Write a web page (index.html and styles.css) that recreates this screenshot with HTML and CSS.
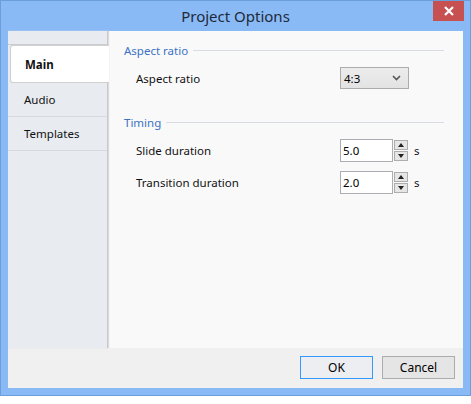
FILE: index.html
```html
<!DOCTYPE html>
<html lang="en">
<head>
  <meta charset="UTF-8">
  <title>Project Options</title>
  <link rel="stylesheet" href="styles.css">
</head>
<body>
  <div class="window">
    <div class="titlebar">
      <span class="title">Project Options</span>
      <div class="close">
        <svg width="12" height="10" viewBox="0 0 12 10">
          <path d="M2 1 L10 9 M10 1 L2 9" stroke="#fff" stroke-width="2.2"/>
        </svg>
      </div>
    </div>
    <div class="client">
      <div class="main">
        <div class="sidebar">
          <div class="tab-spacer"></div>
          <div class="tab active">Main</div>
          <div class="tab">Audio</div>
          <div class="tab">Templates</div>
        </div>
        <div class="content">
          <div class="group-head"><span>Aspect ratio</span><i></i></div>
          <div class="row first">
            <span class="label">Aspect ratio</span>
            <div class="select">
              <span>4:3</span>
              <svg width="9" height="6" viewBox="0 0 9 6">
                <path d="M1 1 L4.5 4.5 L8 1" fill="none" stroke="#555" stroke-width="1.6"/>
              </svg>
            </div>
          </div>
          <div class="group-head timing"><span>Timing</span><i></i></div>
          <div class="row first">
            <span class="label">Slide duration</span>
            <div class="spin-box">
              <div class="input">5.0</div>
              <div class="spin">
                <div class="spin-btn"><b class="up"></b></div>
                <div class="spin-btn"><b class="down"></b></div>
              </div>
              <span class="unit">s</span>
            </div>
          </div>
          <div class="row">
            <span class="label">Transition duration</span>
            <div class="spin-box">
              <div class="input">2.0</div>
              <div class="spin">
                <div class="spin-btn"><b class="up"></b></div>
                <div class="spin-btn"><b class="down"></b></div>
              </div>
              <span class="unit">s</span>
            </div>
          </div>
        </div>
      </div>
      <div class="footer">
        <button class="btn default">OK</button>
        <button class="btn">Cancel</button>
      </div>
    </div>
  </div>
</body>
</html>
```

FILE: styles.css
```css
body {
  margin: 0;
  background: #ffffff;
  font-family: 'Noto Sans', 'Open Sans', sans-serif;
  font-size: 11.5px;
  color: #000;
}

.window {
  width: 471px;
  height: 396px;
  box-sizing: border-box;
  background: #8abaf5;
  border: 1px solid #6a9fdc;
  display: flex;
  flex-direction: column;
}

.titlebar {
  height: 30px;
  position: relative;
  display: flex;
  justify-content: center;
  align-items: center;
}

.title {
  font-size: 15px;
  color: #1e2a3a;
  margin-top: -1px;
}

.close {
  position: absolute;
  right: 6px;
  top: 0;
  width: 31px;
  height: 20px;
  background: #c75050;
  display: flex;
  justify-content: center;
  align-items: center;
}

.client {
  margin: 0 7px 7px;
  flex: 1;
  display: flex;
  flex-direction: column;
  background: #f0f0f0;
}

.main {
  height: 317px;
  display: flex;
  background: #f9f9f9;
}

.sidebar {
  width: 99px;
  background: #e8ebf0;
  border-right: 1px solid #c6c8cc;
  box-shadow: 1px 0 1px #dcdcdc;
  display: flex;
  flex-direction: column;
}

.tab-spacer {
  height: 13px;
  border-bottom: 1px solid #c9ccd1;
}

.tab {
  height: 33px;
  padding-left: 16px;
  display: flex;
  align-items: center;
  border-bottom: 1px solid #d6d9de;
  color: #111;
}

.tab.active {
  height: 36px;
  margin-left: 2px;
  margin-right: -2px;
  padding-left: 14px;
  background: #ffffff;
  border: 1px solid #d0d0d0;
  border-right: none;
  border-radius: 3px 0 0 3px;
  font-weight: bold;
}

.content {
  flex: 1;
  padding: 11px 19px 0 16px;
}

.group-head {
  height: 16px;
  display: flex;
  align-items: center;
  color: #3b72c4;
}

.group-head i {
  flex: 1;
  height: 1px;
  background: #d8dde5;
  margin-left: 5px;
  margin-top: 1px;
}

.group-head.timing {
  margin-top: 25px;
}

.row {
  height: 22px;
  padding-left: 12px;
  display: flex;
  align-items: center;
  margin-top: 10px;
}

.row.first {
  margin-top: 9px;
}

.label {
  width: 204px;
  color: #111;
}

.select {
  width: 57px;
  height: 20px;
  border: 1px solid #acacac;
  background: linear-gradient(#ececec, #e3e3e3);
  display: flex;
  align-items: center;
  justify-content: space-between;
  padding: 0 7px 0 3px;
}

.spin-box {
  display: flex;
  align-items: center;
}

.input {
  width: 49px;
  height: 21px;
  border: 1px solid #abadb3;
  background: #fff;
  padding-left: 2px;
  display: flex;
  align-items: center;
}

.spin {
  margin-left: 1px;
  display: flex;
  flex-direction: column;
  gap: 1px;
}

.spin-btn {
  width: 14px;
  height: 10px;
  border: 1px solid #adadad;
  background: #e6e6e6;
  box-sizing: border-box;
  display: flex;
  justify-content: center;
  align-items: center;
}

.spin-btn b {
  width: 0;
  height: 0;
  border-left: 3px solid transparent;
  border-right: 3px solid transparent;
}

.spin-btn .up {
  border-bottom: 4px solid #222;
}

.spin-btn .down {
  border-top: 4px solid #222;
}

.unit {
  margin-left: 6px;
  color: #111;
}

.footer {
  flex: 1;
  display: flex;
  justify-content: flex-end;
  align-items: flex-start;
  gap: 9px;
  padding: 8px 8px 0 0;
}

.btn {
  width: 73px;
  height: 23px;
  font-family: inherit;
  font-size: 12px;
  color: #000;
  background: #e5e5e5;
  border: 1px solid #acacac;
  padding: 0;
}

.btn.default {
  border-color: #3399ff;
  background: #eceef1;
}
```
